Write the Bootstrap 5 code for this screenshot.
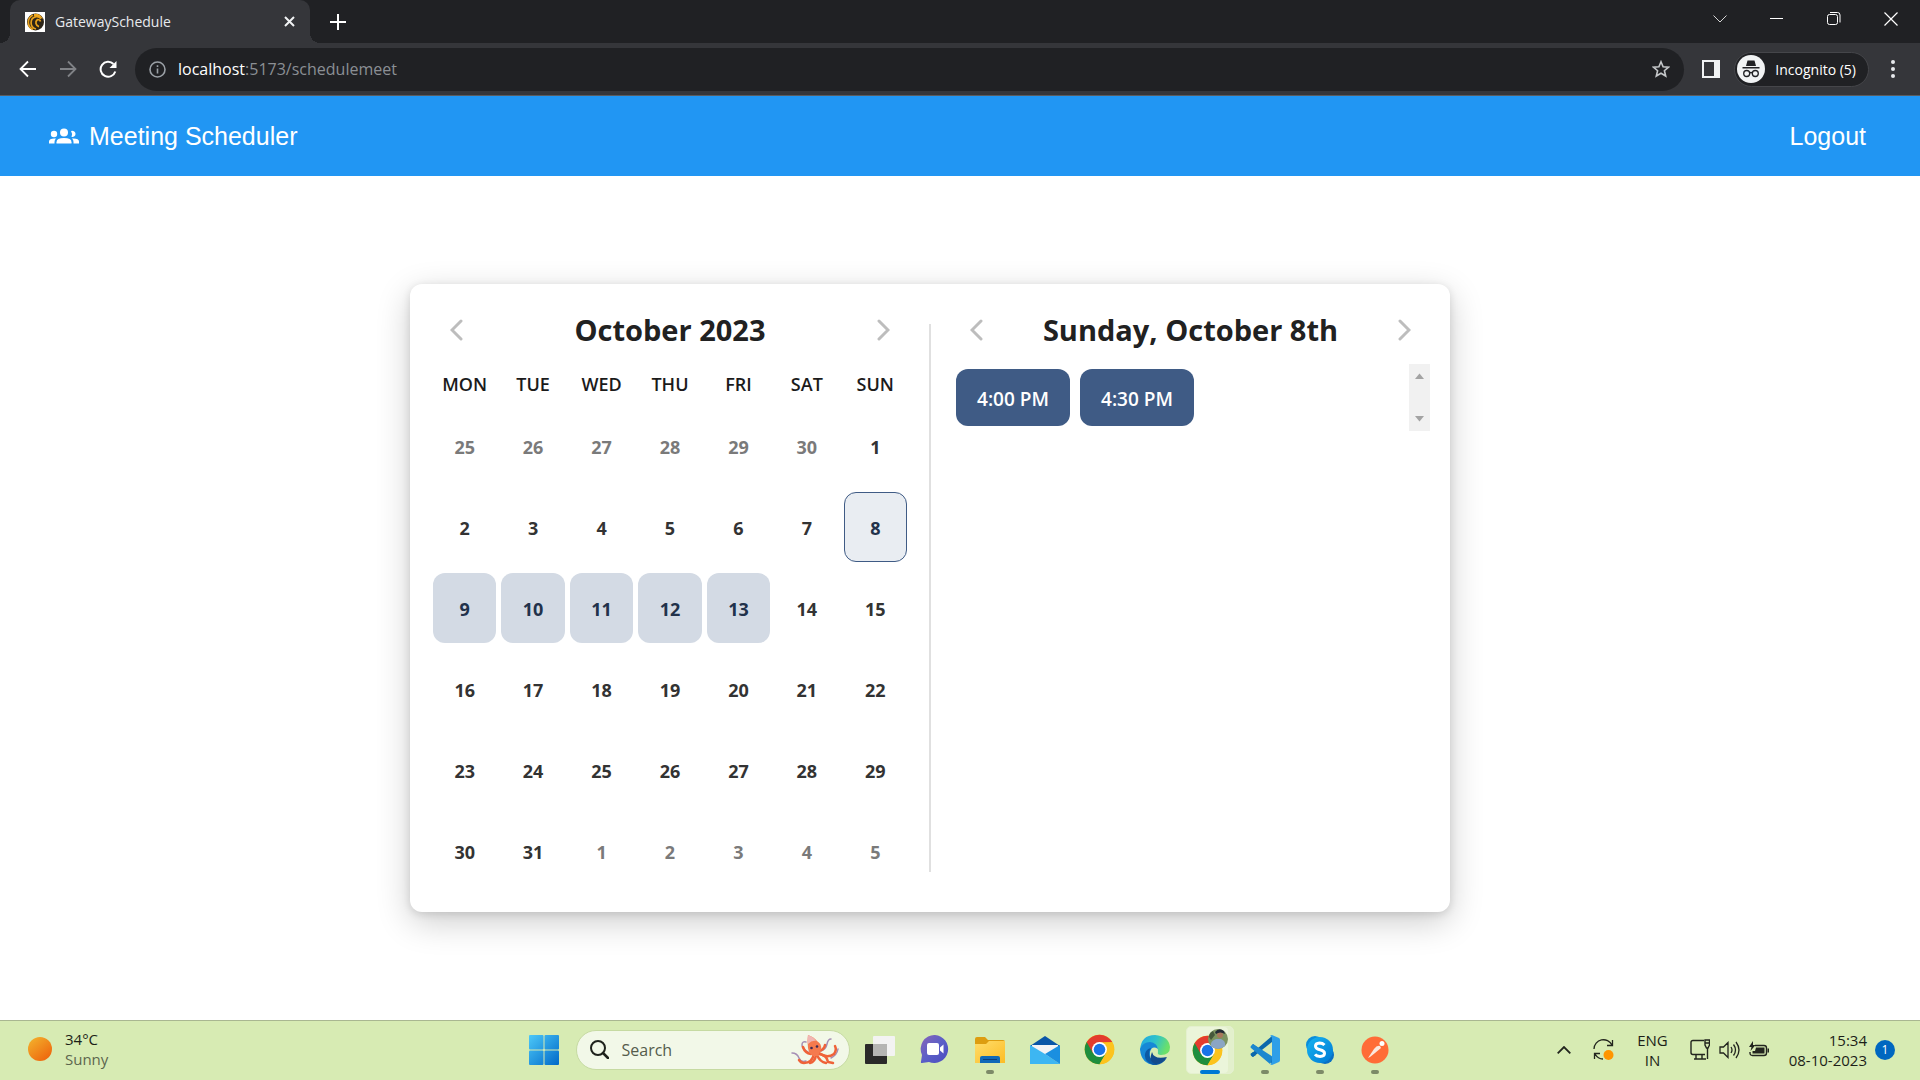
<!DOCTYPE html>
<html lang="en">
<head>
<meta charset="utf-8">
<meta name="viewport" content="width=device-width, initial-scale=1">
<title>GatewaySchedule</title>
<link rel="stylesheet" href="https://cdn.jsdelivr.net/npm/bootstrap@5.3.0/dist/css/bootstrap.min.css">
<style>
  body { font-family: "Segoe UI", "Open Sans", "Noto Sans", sans-serif; background: #fff; color: #212121; }
  button { font-family: inherit; }
  svg { display: block; flex: none; }
  .plain-btn { border: 0; background: transparent; padding: 0; color: inherit; display: flex; align-items: center; justify-content: center; }

  /* browser frame */
  .tab-strip { background: #202124; height: 43px; padding: 0 1px 0 10px; color: #fff; }
  .browser-tab { background: #35363a; width: 300px; height: 43px; border-radius: 10px 10px 0 0; padding: 0 15px; position: relative; font-size: 14px; color: #e8eaed; }
  .browser-tab::before, .browser-tab::after { content: ""; position: absolute; bottom: 0; width: 10px; height: 10px; }
  .browser-tab::before { left: -10px; background: radial-gradient(circle at 0 0, transparent 10px, #35363a 10px); }
  .browser-tab::after { right: -10px; background: radial-gradient(circle at 100% 0, transparent 10px, #35363a 10px); }
  .tab-label { margin-left: 10px; }
  .new-tab { width: 56px; height: 43px; }
  .win-btn { width: 57px; height: 37px; }
  .tool-bar { background: #35363a; height: 53px; border-bottom: 1px solid #5b5c5f; padding: 4px 11px 4px 8px; color: #e8eaed; }
  .nav-ico { width: 40px; height: 40px; }
  .omni { background: #202124; border-radius: 22px; height: 43px; padding: 0 14px; margin-left: 7px; color: #9aa0a6; }
  .omni-text { background: transparent; border: 0; padding: 0; font-size: 16px; line-height: 24px; color: #8b8f94; }
  .omni-text b { color: #fff; font-weight: 400; }
  .side-btn { margin: 0 14px 0 18px; }
  .incog { background: #202124; border: 1px solid #45464a; border-radius: 18px; height: 35px; padding: 0 12px 0 2px; font-size: 14px; color: #fff; gap: 10px; }

  /* app header */
  .app-bar { background: #2196f3; height: 80px; padding: 0 54px 0 49px; font-family: Arial, "Liberation Sans", sans-serif; font-size: 25px; line-height: 32px; }
  .app-bar a { color: #fff; text-decoration: none; gap: 10px; }

  /* scheduler */
  .stage { padding: 108px 60px 108px 0; }
  .sched { width: 1040px; max-width: 100%; border-radius: 12px; background: #fff; box-shadow: 0 10px 34px rgba(0,0,0,.2), 0 2px 8px rgba(0,0,0,.12); padding: 26px 20px 26px 23px; }
  .month-pane { width: 474px; }
  .split-line { width: 2px; background: #e0e0e0; margin: 14px 0 14px 2px; }
  .pane-head { height: 40px; }
  .pane-title { font-size: 29px; line-height: 40px; font-weight: 700; margin: 0; color: #212121; }
  .arrow-btn { width: 47px; height: 40px; color: #bdbdbd; }
  .slot-pane .pane-head { padding: 0 2px; }
  .week-grid { display: grid; grid-template-columns: repeat(7, 1fr); column-gap: 5px; row-gap: 11px; }
  .week-names { font-size: 18px; line-height: 24px; font-weight: 600; text-align: center; margin: 22px 0 15px; color: #1b1b1b; }
  .day { height: 70px; border-radius: 12px; border: 1px solid transparent; background: transparent; padding: 3px 0 0; font-size: 18px; font-weight: 700; color: #333; }
  .day.other { color: #7a7a7a; }
  .day.open { background: #d3dae4; color: #22324b; }
  .day.picked { background: #e9edf2; border-color: #3f5b85; color: #22324b; }
  .slot-pane { width: 479px; }
  .slots { height: 67px; margin-top: 14px; padding-left: 5px; gap: 10px; }
  .slot { width: 114px; height: 57px; border-radius: 12px; border: 0; background: #3f5b85; color: #fff; font-size: 19px; font-weight: 600; padding: 3px 0 0; margin-top: 5px; }
  .scroll-track { width: 21px; height: 67px; background: #f1f1f1; padding: 9px 0; color: #a3a3a3; }

  /* taskbar */
  .task-bar { background: #d7ebb3; border-top: 1px solid #a9b791; height: 60px; font-size: 15px; line-height: 20px; color: #1c1f18; padding: 0 25px 2px; display: grid; grid-template-columns: 1fr auto 1fr; }
  .weather { padding: 0 0 2px 3px; gap: 13px; }
  .weather-sub { color: #5c664e; }
  .launch { padding-left: 7px; gap: 17px; }
  .find-box { background: #f2f8e8; border: 1px solid #c6daa2; border-radius: 20px; width: 274px; height: 40px; padding: 0 8px 0 13px; }
  .find-box input { border: 0; background: transparent; outline: 0; font-size: 16px; color: #555c4c; padding: 0 0 0 13px; flex: 1; min-width: 0; }
  .find-box input::placeholder { color: #555c4c; opacity: 1; }
  .apps { gap: 7px; margin-left: -11px; }
  .app-btn { width: 48px; height: 48px; position: relative; border-radius: 5px; }
  .app-btn.running::after { content: ""; position: absolute; bottom: 0; left: 20px; width: 8px; height: 4px; border-radius: 2px; background: #7c8a68; }
  .app-btn.current { background: #ebf5da; box-shadow: inset -5px 0 0 #e3f0cc; border: 1px solid #e4f0cf; }
  .app-btn.current::after { content: ""; position: absolute; bottom: -1px; left: 13px; width: 20px; height: 4px; border-radius: 2px; background: #0078d4; }
  .tray-gap { gap: 9px; margin-left: 22px; }
  .tray-sync { margin-left: 22px; }
  .notice { width: 20px; height: 20px; border-radius: 50%; background: #0067c0; color: #fff; font-size: 12px; }
</style>
<script src="https://cdn.jsdelivr.net/npm/bootstrap@5.3.0/dist/js/bootstrap.bundle.min.js"></script>
</head>
<body class="d-flex flex-column min-vh-100">

<svg width="0" height="0" class="position-absolute" aria-hidden="true">
  <defs>
    <symbol id="chromeLogo" viewBox="0 0 48 48">
      <circle cx="24" cy="24" r="23" fill="#fbc116"/>
      <path d="M24 24 L4.1 12.5 A23 23 0 0 0 24 47 L34 30 Z" fill="#1e8e3e"/>
      <path d="M24 24 V13 H43.9 A23 23 0 0 1 24 47 L34 29.7 Z" fill="#fcc31e"/>
      <path d="M4.1 12.5 A23 23 0 0 1 43.9 12.5 L24 12.8 L14 29.7 Z" fill="#e33b2e"/>
      <circle cx="24" cy="24" r="11.5" fill="#fff"/>
      <circle cx="24" cy="24" r="9" fill="#1a73e8"/>
    </symbol>
    <linearGradient id="gWin" x1="0" y1="0" x2="30" y2="30" gradientUnits="userSpaceOnUse"><stop offset="0" stop-color="#4cc8f8"/><stop offset="1" stop-color="#0069c8"/></linearGradient>
    <linearGradient id="gSun" x1="0" y1="0" x2=".8" y2="1"><stop offset="0" stop-color="#f3b62e"/><stop offset="1" stop-color="#ee640d"/></linearGradient>
    <linearGradient id="gFold" x1="0" y1="0" x2="1" y2="1"><stop offset="0" stop-color="#ffdd6b"/><stop offset="1" stop-color="#fcbc25"/></linearGradient>
    <linearGradient id="gChat" x1="0" y1="0" x2="1" y2="1"><stop offset="0" stop-color="#8a65b8"/><stop offset=".5" stop-color="#5b5fc7"/><stop offset="1" stop-color="#4b4cc0"/></linearGradient>
    <linearGradient id="gEdge" x1="0" y1="0" x2="1" y2=".3"><stop offset="0" stop-color="#1fa4e6"/><stop offset=".55" stop-color="#2fc3c8"/><stop offset="1" stop-color="#6be06a"/></linearGradient>
    <linearGradient id="gSky" x1="0" y1="0" x2="1" y2="1"><stop offset="0" stop-color="#17b5f0"/><stop offset="1" stop-color="#0078d4"/></linearGradient>
  </defs>
</svg>

<header>
  <div class="tab-strip d-flex">
    <div class="browser-tab d-flex align-items-center">
      <svg width="20" height="20" viewBox="0 0 20 20"><rect width="20" height="20" fill="#fff"/><circle cx="10.500" cy="10" r="8.500" fill="#2b2418"/><g fill="none" stroke="#e9a21c" stroke-width="1.700"><path d="M8 17.500A8 8 0 0 1 8 3"/><path d="M11 17A6.300 6.300 0 0 1 11 4.700q3-.500 5 2"/><path d="M14 14.600A4 4 0 0 1 12.500 7.500q2.500 0 3 2"/></g><path d="M9 2q6-1 9 5-4-3.500-9-2.500z" fill="#f0a81e"/></svg>
      <span class="tab-label flex-grow-1">GatewaySchedule</span>
      <button class="plain-btn" aria-label="Close tab"><svg width="11" height="11" viewBox="0 0 11 11" stroke="#f1f3f4" stroke-width="2"><path d="M1 1l9 9M10 1l-9 9"/></svg></button>
    </div>
    <button class="plain-btn new-tab" aria-label="New tab"><svg width="16" height="16" viewBox="0 0 16 16" stroke="#fff" stroke-width="2"><path d="M8 0v16M0 8h16"/></svg></button>
    <div class="d-flex ms-auto">
      <button class="plain-btn win-btn" aria-label="Search tabs"><svg width="14" height="8" viewBox="0 0 14 8" fill="none" stroke="#d5d5d5"><path d="M.5.5L7 7 13.500.5"/></svg></button>
      <button class="plain-btn win-btn" aria-label="Minimize"><svg width="13" height="1" viewBox="0 0 13 1"><path d="M0 0h13v1H0z" fill="#fff"/></svg></button>
      <button class="plain-btn win-btn" aria-label="Restore"><svg width="14" height="14" viewBox="0 0 14 14" fill="none" stroke="#fff"><rect x=".5" y="2.500" width="10" height="10" rx="2"/><path d="M3 .5h7.500a2.500 2.500 0 0 1 2.500 2.500v7.500"/></svg></button>
      <button class="plain-btn win-btn" aria-label="Close window"><svg width="14" height="14" viewBox="0 0 14 14" stroke="#fff" stroke-width="1.200"><path d="M.5.5l13 13M13.500.5l-13 13"/></svg></button>
    </div>
  </div>
  <div class="tool-bar d-flex align-items-center">
    <div class="d-flex">
      <button class="plain-btn nav-ico" aria-label="Back"><svg width="18" height="18" viewBox="0 0 18 18" fill="none" stroke="#fff" stroke-width="1.800"><path d="M17 9H2M9 1.500L1.500 9 9 16.500"/></svg></button>
      <button class="plain-btn nav-ico" aria-label="Forward"><svg width="18" height="18" viewBox="0 0 18 18" fill="none" stroke="#818387" stroke-width="1.800"><path d="M1 9h15M9 1.500L16.500 9 9 16.500"/></svg></button>
      <button class="plain-btn nav-ico" aria-label="Reload"><svg width="18" height="18" viewBox="0 0 18 18"><path d="M16.300 11.500A7.500 7.500 0 1 1 14.500 4" fill="none" stroke="#fff" stroke-width="2"/><path d="M17.500 1v7h-7z" fill="#fff"/></svg></button>
    </div>
    <div class="omni d-flex align-items-center flex-grow-1">
      <svg width="17" height="17" viewBox="0 0 17 17" fill="none" stroke="#9aa0a6" stroke-width="1.600"><circle cx="8.500" cy="8.500" r="7.500"/><path d="M8.500 7.500v5M8.500 4.300v1.800"/></svg>
      <span class="omni-text flex-grow-1 ms-2 ps-1"><b>localhost</b>:5173/schedulemeet</span>
      <button class="plain-btn" aria-label="Bookmark this page"><svg width="18" height="18" viewBox="0 0 18 18" fill="none" stroke="#c4c7c9" stroke-width="1.600"><path d="M9 1.800l2.100 5 5.400.4-4.100 3.500 1.300 5.300L9 13.200 4.300 16l1.300-5.300L1.500 7.200l5.400-.4z"/></svg></button>
    </div>
    <div class="d-flex align-items-center">
      <button class="plain-btn side-btn" aria-label="Side panel"><svg width="18" height="18" viewBox="0 0 18 18"><path fill="#f1f3f4" fill-rule="evenodd" d="M0 0h18v18H0zM2 2v14h10V2z"/></svg></button>
      <button class="incog d-flex align-items-center"><svg width="28" height="28" viewBox="0 0 28 28"><circle cx="14" cy="14" r="14" fill="#f1f3f4"/><path d="M5.500 12h17v1.500h-17zM9 11l1.500-5.500h7L19 11z" fill="#202124"/><g fill="none" stroke="#202124" stroke-width="1.300"><circle cx="9.700" cy="18.500" r="3"/><circle cx="18.300" cy="18.500" r="3"/><path d="M12.500 18q1.500-1 3 0"/></g></svg>Incognito (5)</button>
      <button class="plain-btn ms-2 ps-2 pe-2" aria-label="Menu"><svg width="16" height="18" viewBox="0 0 16 18" fill="#e8eaed"><circle cx="8" cy="2" r="2"/><circle cx="8" cy="9" r="2"/><circle cx="8" cy="16" r="2"/></svg></button>
    </div>
  </div>
</header>

<nav class="app-bar d-flex align-items-center justify-content-between">
  <a href="#" class="d-flex align-items-center">
    <svg width="30" height="16" viewBox="0 0 30 16" fill="#fff"><circle cx="15" cy="4.500" r="4"/><path d="M7.500 15.500v-1.300q0-4.200 7.500-4.200t7.500 4.200v1.300z"/><circle cx="5" cy="6" r="3.200"/><path d="M0 15.500v-2q0-3 5.500-3l1.500.1q-1.500 1.500-1.500 3.400v1.500z"/><path d="M22 3a3.200 3.200 0 1 1 .5 6q1.500-3-.5-6z"/><path d="M24.500 15.500V14q0-2-1.500-3.400 7-.4 7 2.900v2z"/></svg>
    <span>Meeting Scheduler</span>
  </a>
  <a href="#">Logout</a>
</nav>

<main class="stage flex-grow-1 d-flex justify-content-center">
  <section class="sched d-flex justify-content-between">
    <div class="month-pane">
      <div class="pane-head d-flex justify-content-between">
        <button class="plain-btn arrow-btn" aria-label="Previous month"><svg width="13" height="22" viewBox="0 0 13 22" fill="none" stroke="currentColor" stroke-width="3" stroke-linecap="round"><path d="M11 2L2 11l9 9"/></svg></button>
        <h2 class="pane-title">October 2023</h2>
        <button class="plain-btn arrow-btn" aria-label="Next month"><svg width="13" height="22" viewBox="0 0 13 22" fill="none" stroke="currentColor" stroke-width="3" stroke-linecap="round"><path d="M2 2l9 9-9 9"/></svg></button>
      </div>
      <div class="week-grid week-names"><span>MON</span><span>TUE</span><span>WED</span><span>THU</span><span>FRI</span><span>SAT</span><span>SUN</span></div>
      <div class="week-grid">
        <button class="day other">25</button><button class="day other">26</button><button class="day other">27</button><button class="day other">28</button><button class="day other">29</button><button class="day other">30</button><button class="day">1</button>
        <button class="day">2</button><button class="day">3</button><button class="day">4</button><button class="day">5</button><button class="day">6</button><button class="day">7</button><button class="day picked">8</button>
        <button class="day open">9</button><button class="day open">10</button><button class="day open">11</button><button class="day open">12</button><button class="day open">13</button><button class="day">14</button><button class="day">15</button>
        <button class="day">16</button><button class="day">17</button><button class="day">18</button><button class="day">19</button><button class="day">20</button><button class="day">21</button><button class="day">22</button>
        <button class="day">23</button><button class="day">24</button><button class="day">25</button><button class="day">26</button><button class="day">27</button><button class="day">28</button><button class="day">29</button>
        <button class="day">30</button><button class="day">31</button><button class="day other">1</button><button class="day other">2</button><button class="day other">3</button><button class="day other">4</button><button class="day other">5</button>
      </div>
    </div>
    <div class="split-line"></div>
    <div class="slot-pane">
      <div class="pane-head d-flex justify-content-between">
        <button class="plain-btn arrow-btn" aria-label="Previous day"><svg width="13" height="22" viewBox="0 0 13 22" fill="none" stroke="currentColor" stroke-width="3" stroke-linecap="round"><path d="M11 2L2 11l9 9"/></svg></button>
        <h2 class="pane-title">Sunday, October 8th</h2>
        <button class="plain-btn arrow-btn" aria-label="Next day"><svg width="13" height="22" viewBox="0 0 13 22" fill="none" stroke="currentColor" stroke-width="3" stroke-linecap="round"><path d="M2 2l9 9-9 9"/></svg></button>
      </div>
      <div class="slots d-flex">
        <button class="slot">4:00 PM</button>
        <button class="slot">4:30 PM</button>
        <div class="scroll-track ms-auto d-flex flex-column align-items-center justify-content-between">
          <svg width="9" height="6" viewBox="0 0 9 6" fill="currentColor"><path d="M0 6L4.500.5 9 6z"/></svg>
          <svg width="9" height="6" viewBox="0 0 9 6" fill="currentColor"><path d="M0 0l4.500 5.500L9 0z"/></svg>
        </div>
      </div>
    </div>
  </section>
</main>

<footer class="task-bar">
  <div class="weather d-flex align-items-center">
    <svg width="24" height="24" viewBox="0 0 24 24"><circle cx="12" cy="12" r="12" fill="url(#gSun)"/></svg>
    <div><div>34°C</div><div class="weather-sub">Sunny</div></div>
  </div>
  <div class="launch d-flex align-items-center">
    <button class="plain-btn" aria-label="Start"><svg width="30" height="30" viewBox="0 0 30 30" fill="url(#gWin)"><rect width="14.500" height="14.500" rx="1"/><rect x="15.500" width="14.500" height="14.500" rx="1"/><rect y="15.500" width="14.500" height="14.500" rx="1"/><rect x="15.500" y="15.500" width="14.500" height="14.500" rx="1"/></svg></button>
    <div class="find-box d-flex align-items-center">
      <svg width="19" height="19" viewBox="0 0 19 19" fill="none" stroke="#1f221c" stroke-width="2"><circle cx="8" cy="8" r="7"/><path d="M13 13l5 5" stroke-linecap="round" stroke-width="2.500"/></svg>
      <input type="text" placeholder="Search" aria-label="Search">
      <svg width="50" height="32" viewBox="0 0 50 32" fill="none" stroke-linecap="round">
        <g stroke="#a58fb4" stroke-width="1.500"><path d="M1 19q5 0 7 5t7 3"/><path d="M17 18q-6-3-6-7t4-3"/><path d="M30 17q5-2 6-7t4-5"/><path d="M40 24q6-3 7-9"/></g>
        <g stroke="#ef6238" stroke-width="2.500"><path d="M20 20q-6-1-8-7"/><path d="M23 20q-2 9-10 9-3 0-5-3"/><path d="M25 21q-1 7-6 8"/><path d="M28 20q8 1 9 8l5 1"/><path d="M28 19q8 6 15 1 3-4 1-8"/><path d="M28 17q5-1 6-6"/><path d="M26 21q3 7 9 8"/></g>
        <path d="M17 1q6 2 9 6 5 3 4 8-1 3-3 7h-5q-4-2-5-8-1-7 0-13z" fill="#f57a4e"/>
        <path d="M17 1q6 2 8 6-4-1-8 3-1-5 0-9z" fill="#f0b6b4"/>
        <circle cx="20.500" cy="14" r="1.300" fill="#3a2a55"/><circle cx="26" cy="12.500" r="1.300" fill="#3a2a55"/>
      </svg>
    </div>
    <div class="apps d-flex">
      <button class="plain-btn app-btn" aria-label="Task view"><svg width="30" height="28" viewBox="0 0 30 28"><rect y="8" width="22" height="20" rx="1" fill="#2a2a29"/><rect x="8" width="22" height="20" rx="1" fill="#f3f3f2"/><path d="M8 8h14v12H8z" fill="#b5b5b3"/></svg></button>
      <button class="plain-btn app-btn" aria-label="Chat"><svg width="30" height="29" viewBox="0 0 30 29"><path d="M15 0a14 14 0 1 1-6 27l-7 1q-1.500 0-1-1.500L2 20A14 14 0 0 1 15 0z" fill="url(#gChat)"/><rect x="7" y="8" width="12" height="12" rx="2" fill="#fff"/><path d="M20 12.500l3.500-3v9l-3.500-3z" fill="#fff"/></svg></button>
      <button class="plain-btn app-btn running" aria-label="File Explorer"><svg width="30" height="28" viewBox="0 0 30 28"><path d="M0 3q0-2 2-2h8l3 3h15q2 0 2 2v8H0z" fill="#dd9d10"/><path d="M0 8h11l3-3h16v22H0z" fill="url(#gFold)"/><path d="M5 27v-5q0-2 2-2h16q2 0 2 2v5z" fill="#1069b8"/><path d="M8 23h14v1H8z" fill="#0a3e7c"/></svg></button>
      <button class="plain-btn app-btn" aria-label="Mail"><svg width="30" height="28" viewBox="0 0 30 28"><path d="M0 10L15 0l15 10v4H0z" fill="#0a56a8"/><path d="M2 9h26v12H2z" fill="#f3f3f6"/><path d="M0 9l15 9 15 10H0z" fill="#3db6f2"/><path d="M30 9v19L15 18z" fill="#1a8fe0"/></svg></button>
      <button class="plain-btn app-btn" aria-label="Chrome"><svg width="31" height="31"><use href="#chromeLogo"/></svg></button>
      <button class="plain-btn app-btn" aria-label="Edge"><svg width="30" height="30" viewBox="0 0 30 30"><path d="M0 15Q1 0 15 0q14 1 15 12 0 8-9 8-4 0-3-3 1-6-6-7-8 0-12 6z" fill="url(#gEdge)"/><path d="M0 14q3-7 10-7 7 1 8 7-6-4-8 3-1 8 5 13Q1 29 0 14z" fill="#1688d6"/><path d="M11 13q-5 8 3 13 6 3 13-3-6 8-14 7Q4 27 5 19q1-5 6-6z" fill="#0c59a4"/><path d="M12 17q2 8 15 5-4 7-12 7-7-3-3-12z" fill="#124a8c"/></svg></button>
      <button class="plain-btn app-btn current" aria-label="Chrome, GatewaySchedule"><svg width="36" height="44" viewBox="0 0 36 44"><use href="#chromeLogo" x="0" y="7" width="31" height="31"/><circle cx="26" cy="11" r="10" fill="#7c9460"/><path d="M19 18q-1-5 5-7h5q5 2 4 7-7 6-14 0z" fill="#8ba5c4"/><circle cx="28" cy="7" r="3" fill="#a8775b"/><path d="M23 4q4-5 9-1l1 3q-5-3-9 0z" fill="#232b35"/><path d="M17 9q0-4 4-6l2 4-4 5z" fill="#46583b"/></svg></button>
      <button class="plain-btn app-btn running" aria-label="Visual Studio Code"><svg width="30" height="30" viewBox="0 0 30 30"><path d="M3 9l19 14v6L1 11.500z" fill="#1478bd"/><path d="M3 22L22 7V1L1 19z" fill="#0b68ac"/><path d="M1 18.500q-1 1 0 2l1.500 1.500L6 20l-3-3z" fill="#0b68ac"/><path d="M3 9L1 11q-1 1 0 2l19 16 3-7z" fill="#1c87cf"/><path d="M22 0l7 3q1 .5 1 2v20q0 1.500-1 2l-7 3q-1 0-2-1 2 0 2-3V4q0-3-2-3 1-1 2-1z" fill="#2f9fe8"/></svg></button>
      <button class="plain-btn app-btn running" aria-label="Skype"><svg width="28" height="28" viewBox="0 0 28 28"><circle cx="9" cy="9" r="9" fill="#0a8ddb"/><circle cx="19" cy="19" r="9" fill="#0a6fc4"/><circle cx="14" cy="14" r="13" fill="url(#gSky)"/><path d="M18.500 9q-2-2-5-2-4 .2-4 3t4.500 3.700q4.500 1 4.500 3.500 0 3-4.500 3.200-3.500 0-5-2" fill="none" stroke="#fff" stroke-width="3"/></svg></button>
      <button class="plain-btn app-btn running" aria-label="Postman"><svg width="28" height="28" viewBox="0 0 28 28"><circle cx="14" cy="14" r="13.500" fill="#ff6c37"/><path d="M7 22l6-9q3-4 6-3l1 2-6 5-5 4z" fill="#fbe8df"/><circle cx="21" cy="7.500" r="2.500" fill="#fff"/></svg></button>
    </div>
  </div>
  <div class="d-flex align-items-center justify-content-end">
    <svg width="14" height="8" viewBox="0 0 14 8" fill="none" stroke="#22251e" stroke-width="1.800"><path d="M.7 7.300L7 1l6.300 6.300"/></svg>
    <svg class="tray-sync" width="22" height="22" viewBox="0 0 22 22" fill="none" stroke="#22251e" stroke-width="1.300"><path d="M1 10a9.500 9.500 0 0 1 18-4M19.500 1v5.500H14M1.500 20v-5.500H7M2 15q3 5 8 5"/><circle cx="15.500" cy="16" r="5" fill="#ff9500" stroke="none"/></svg>
    <div class="tray-sync text-center">ENG<br>IN</div>
    <div class="tray-gap d-flex align-items-center">
      <svg width="20" height="21" viewBox="0 0 20 21" fill="none" stroke="#22251e" stroke-width="1.400"><path d="M14 1.500H3Q1 1.500 1 3.500v10q0 2 2 2h12M6 16v4M12 16v4M4 20h12M17.500 9v11"/><path d="M15 1h4.500v5L18 9h-1.500L15 6zM15 4h4.500"/></svg>
      <svg width="21" height="18" viewBox="0 0 21 18" fill="none" stroke="#22251e" stroke-width="1.300"><path d="M1 6h3.500L9 1.500v15L4.500 12H1zM12 6q2 3 0 6M14.500 3.500q4 5.500 0 11M17 1q6 8 0 16"/></svg>
      <svg width="20" height="17" viewBox="0 0 20 17"><path d="M6 4.500h9q2.500 0 2.500 2.500v5q0 2.500-2.500 2.500H3.500Q1 14.500 1 12v-1" fill="none" stroke="#22251e" stroke-width="1.400"/><path d="M7 6.500h8.500v6h-12V10H6zM18.500 7.500H20v4h-1.500z" fill="#22251e"/><path d="M4 0L0 6h2.500L1.500 10 6.500 4H4z" fill="#22251e"/></svg>
    </div>
    <div class="text-end ms-3 ps-1">15:34<br>08-10-2023</div>
    <div class="notice d-flex align-items-center justify-content-center ms-2">1</div>
  </div>
</footer>
</body>
</html>
